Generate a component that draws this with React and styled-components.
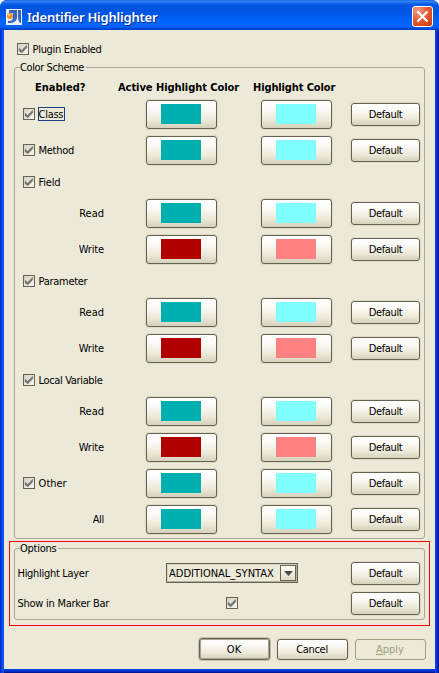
import React from 'react';
import styled, { createGlobalStyle, css } from 'styled-components';

const GlobalStyle = createGlobalStyle`
  *, *::before, *::after { box-sizing: border-box; }
  html, body { margin: 0; padding: 0; background: #fff; }
  body {
    font-family: 'DejaVu Sans Condensed', 'DejaVu Sans', sans-serif;
    font-stretch: condensed;
    font-size: 11px;
    line-height: 14px;
    color: #000;
    overflow: hidden;
  }
  button { font: inherit; color: inherit; margin: 0; padding: 0; }
`;

const Window = styled.div`
  width: 439px;
  height: 673px;
  display: flex;
  flex-direction: column;
  border-radius: 7px 7px 0 0;
  overflow: hidden;
  background: #0831d9;
`;

const TitleBar = styled.header`
  height: 30px;
  flex: none;
  display: flex;
  align-items: flex-start;
  padding: 6px 6px 0;
  background: linear-gradient(
    to bottom,
    #0a4fd8 0, #3c8cf6 1px, #2a7bf2 2px, #0c5ee6 4px, #0055e2 6px,
    #0054e0 10px, #0058ea 15px, #0063f8 20px, #0066ff 25px, #0060f6 27px, #0046d0 29px, #003dc0 30px
  );
`;

const AppIcon = styled.svg`
  width: 16px;
  height: 16px;
  flex: none;
  margin-top: 3px;
`;

const Title = styled.h1`
  margin: 2px 0 0 5px;
  flex: 1;
  font: 600 13px/18px 'Noto Sans', sans-serif;
  font-stretch: normal;
  color: #fff;
  letter-spacing: -0.22px;
  text-shadow: 1px 1px 0 #0a2a8c;
  white-space: nowrap;
`;

const CloseButton = styled.button`
  width: 21px;
  height: 21px;
  flex: none;
  display: grid;
  place-items: center;
  border: 1px solid #fff;
  border-radius: 3px;
  background: radial-gradient(circle at 25% 20%, #f0a088 0, #e5643c 40%, #de4a1c 70%, #c23a10 100%);
`;

const Frame = styled.div`
  flex: 1;
  min-height: 0;
  display: flex;
  padding: 0 4px 4px;
  background:
    linear-gradient(to right, #001dc8 0, #0036de 1px, #0855ec 2px, #0a50e6 4px) left / 4px 100% no-repeat,
    linear-gradient(to left, #00138c 0, #001ea0 1px, #0036d8 2px, #0048ea 4px) right / 4px 100% no-repeat,
    linear-gradient(to top, #00138c 0, #001ea0 1px, #0036d8 2px, #0048ea 4px) bottom / 100% 4px no-repeat;
`;

const Content = styled.main`
  flex: 1;
  display: flex;
  flex-direction: column;
  background: #ece9d8;
`;

const Text = styled.span`
  display: inline-block;
  padding-top: 2px;
  white-space: nowrap;
  letter-spacing: ${(p) => p.$spacing || 0}px;
  font-weight: ${(p) => (p.$bold ? 'bold' : 'normal')};
`;

const CheckLabel = styled.label`
  display: flex;
  align-items: center;
  gap: 3px;
`;

const Caption = styled.span`
  display: inline-flex;
  align-items: center;
  height: 14px;
  padding: 0 2px 0 0.6px;
  box-shadow: ${(p) => (p.$focused ? 'inset 0 0 0 1px #1d3e80' : 'none')};
`;

const Box = styled.span`
  width: 12px;
  height: 12px;
  flex: none;
  display: grid;
  place-items: center;
  border: 1px solid #67634f;
  background: linear-gradient(135deg, #d2d0c4, #f8f8f4);
`;

const PluginRow = styled.div`
  height: 36px;
  padding: 12px 0 0 13px;
  flex: none;
`;

const Group = styled.fieldset`
  position: relative;
  flex: none;
  height: ${(p) => p.$height}px;
  margin: 0;
  padding: ${(p) => p.$top || 0}px 0 0;
  border: 1px solid #aca899;
  border-radius: 3px;
`;

const Legend = styled.span`
  position: absolute;
  left: 5px;
  top: -3px;
  height: 4px;
  display: flex;
  align-items: center;
  padding: 0 2px 0 0;
  background: #ece9d8;
`;

const SchemeArea = styled.div`
  padding: 1px 10px 0;
  flex: none;
`;

const columns = css`
  display: grid;
  grid-template-columns: 131px 115px 90px 69px;
  align-items: center;
`;

const HeaderRow = styled.div`
  display: grid;
  grid-template-columns: 103px 135px 1fr;
  align-items: center;
  height: 28px;
  padding-top: 9px;
`;

const HeaderCell = styled.div`
  padding-left: ${(p) => p.$indent || 0}px;
  white-space: nowrap;
`;

const SchemeRow = styled.div`
  ${columns}
  height: ${(p) => (p.$short ? 27 : 36)}px;
`;

const NameCell = styled.div`
  display: flex;
  padding-left: ${(p) => (p.$sub ? 0 : 8)}px;
  padding-right: ${(p) => (p.$sub ? 42 : 0)}px;
  justify-content: ${(p) => (p.$sub ? 'flex-end' : 'flex-start')};
`;

const Button = styled.button`
  width: ${(p) => p.$w || 69}px;
  height: ${(p) => p.$h || 23}px;
  display: grid;
  place-items: center;
  border: 1px solid #65624f;
  border-radius: 3px;
  background: linear-gradient(to bottom, #fff 0, #fbfaf6 30%, #ece9d8 70%, #d4d0bb 100%);
  box-shadow: 0 0 0 1px #dedac6;
  ${(p) => p.$swatch && css`
    padding: 0 1px 1px 0;
  `}
  ${(p) => p.$lifted && css`
    padding: 0 1px 1px 0;
  `}
  ${(p) => p.$primary && css`
    box-shadow: inset 0 0 0 1px #a6a392, 0 0 0 1px #c4c1ad;
  `}
  ${(p) => p.$disabled && css`
    color: #a19d80;
    border-color: #a19d80;
    background: #ece9d8;
    box-shadow: none;
  `}
`;

const Swatch = styled.span`
  width: 40px;
  height: 20px;
  background: ${(p) => p.$color};
`;

const OptionsFrame = styled.section`
  margin: 2px 5px 0 5px;
  height: 85px;
  flex: none;
  padding: 6px 4px 0 4px;
  border: 1px solid #f00;
`;

const OptionRow = styled.div`
  display: grid;
  grid-template-columns: 151px 185px 69px;
  align-items: center;
  height: 30px;
`;

const OptionLabel = styled.div`
  padding-left: 2.5px;
`;

const OptionValue = styled.div`
  padding-left: ${(p) => p.$indent || 0}px;
`;

const Combo = styled.div`
  width: 132px;
  height: 20px;
  display: flex;
  align-items: center;
  justify-content: space-between;
  padding: 0 1px 0 2px;
  border: 1px solid #65624f;
  box-shadow: inset -1px -1px 0 #b5b2a0, inset 1px 1px 0 #d5d2c0;
`;

const ComboArrow = styled.span`
  width: 16px;
  height: 16px;
  display: grid;
  place-items: center;
  border: 1px solid #65624f;
  background: linear-gradient(to bottom, #fff, #dedbc9);
`;

const Footer = styled.footer`
  display: flex;
  justify-content: flex-end;
  align-items: flex-end;
  gap: 7px;
  padding: 12px 9px 0 0;
`;

const Check = () => (
  <Box>
    <svg width="10" height="10" viewBox="0 0 10 10">
      <path d="M1 4 3.6 6.2 8.8 1V3.8L3.8 9 1 6.8Z" fill="#74736c" stroke="#74736c" strokeWidth=".3" />
    </svg>
  </Box>
);

const teal = '#00b0b0';
const cyan = '#80ffff';
const red = '#b00000';
const pink = '#ff8080';

const rows = [
  { name: 'Class', focused: true, active: teal, normal: cyan },
  { name: 'Method', active: teal, normal: cyan },
  { name: 'Field' },
  { name: 'Read', sub: true, active: teal, normal: cyan },
  { name: 'Write', sub: true, active: red, normal: pink },
  { name: 'Parameter' },
  { name: 'Read', sub: true, active: teal, normal: cyan },
  { name: 'Write', sub: true, active: red, normal: pink },
  { name: 'Local Variable' },
  { name: 'Read', sub: true, active: teal, normal: cyan },
  { name: 'Write', sub: true, active: red, normal: pink },
  { name: 'Other', active: teal, normal: cyan },
  { name: 'All', sub: true, active: teal, normal: cyan },
];

// Per-label tracking, in pixels, that gives the narrow dialog font its widths.
const spacing = {
  'Plugin Enabled': -0.32,
  'Color Scheme': -0.4,
  'Active Highlight Color': -0.05,
  'Highlight Color': -0.12,
  Class: -0.3,
  Method: -0.3,
  Field: -0.2,
  Parameter: -0.3,
  'Local Variable': -0.35,
  Default: -0.35,
  Options: -0.25,
  Write: -0.15,
  All: -0.3,
  'Highlight Layer': -0.3,
  'Show in Marker Bar': -0.26,
  Cancel: -0.3,
};

const T = ({ children, bold }) => (
  <Text $bold={bold} $spacing={spacing[children]}>{children}</Text>
);

const DefaultButton = () => <Button><T>Default</T></Button>;

const ColorButton = ({ color }) => (
  <Button $w={71} $h={29} $swatch><Swatch $color={color} /></Button>
);

export default function App() {
  return (
    <>
      <GlobalStyle />
      <Window>
        <TitleBar>
          <AppIcon viewBox="0 0 16 16">
            <rect width="16" height="16" fill="#e9eef8" />
            <path d="M3 1h8v7c0 4-3 6-9 6v-2c4 0 5-1 5-4V4H3Z" fill="#3566bd" />
            <path d="M12 1h3v13h-1c-1-2-2-3-2-6Z" fill="#3566bd" />
            <circle cx="4" cy="7" r="3" fill="#f08a22" />
            <circle cx="3.2" cy="6.2" r="1.3" fill="#ffc878" />
          </AppIcon>
          <Title>Identifier Highlighter</Title>
          <CloseButton aria-label="Close">
            <svg width="13" height="13" viewBox="0 0 13 13">
              <path d="M1.5 1.5 11.5 11.5M11.5 1.5 1.5 11.5" stroke="#fff" strokeWidth="2.2" />
            </svg>
          </CloseButton>
        </TitleBar>
        <Frame>
          <Content>
            <PluginRow>
              <CheckLabel><Check /><Caption><T>Plugin Enabled</T></Caption></CheckLabel>
            </PluginRow>
            <SchemeArea>
              <Group $height={472}>
                <Legend><T>Color Scheme</T></Legend>
                <HeaderRow>
                  <HeaderCell $indent={20}><T bold>Enabled?</T></HeaderCell>
                  <HeaderCell><T bold>Active Highlight Color</T></HeaderCell>
                  <HeaderCell><T bold>Highlight Color</T></HeaderCell>
                </HeaderRow>
                {rows.map((r, i) => (
                  <SchemeRow key={i} $short={!r.active}>
                    <NameCell $sub={r.sub}>
                      {r.sub ? <T>{r.name}</T> : (
                        <CheckLabel><Check /><Caption $focused={r.focused}><T>{r.name}</T></Caption></CheckLabel>
                      )}
                    </NameCell>
                    {r.active && (
                      <>
                        <ColorButton color={r.active} />
                        <ColorButton color={r.normal} />
                        <DefaultButton />
                      </>
                    )}
                  </SchemeRow>
                ))}
              </Group>
            </SchemeArea>
            <OptionsFrame>
              <Group $height={72} $top={9}>
                <Legend><T>Options</T></Legend>
                <OptionRow>
                  <OptionLabel><T>Highlight Layer</T></OptionLabel>
                  <OptionValue>
                    <Combo>
                      <T>ADDITIONAL_SYNTAX</T>
                      <ComboArrow>
                        <svg width="9" height="5" viewBox="0 0 9 5"><path d="M0 0H9L4.5 5Z" fill="#4e4c3f" /></svg>
                      </ComboArrow>
                    </Combo>
                  </OptionValue>
                  <DefaultButton />
                </OptionRow>
                <OptionRow>
                  <OptionLabel><T>Show in Marker Bar</T></OptionLabel>
                  <OptionValue $indent={60}><Check /></OptionValue>
                  <DefaultButton />
                </OptionRow>
              </Group>
            </OptionsFrame>
            <Footer>
              <Button $w={71} $h={22} $primary $lifted><T>OK</T></Button>
              <Button $w={71} $h={21} $lifted><T>Cancel</T></Button>
              <Button $w={71} $h={21} $disabled $lifted><Text><u>A</u>pply</Text></Button>
            </Footer>
          </Content>
        </Frame>
      </Window>
    </>
  );
}
